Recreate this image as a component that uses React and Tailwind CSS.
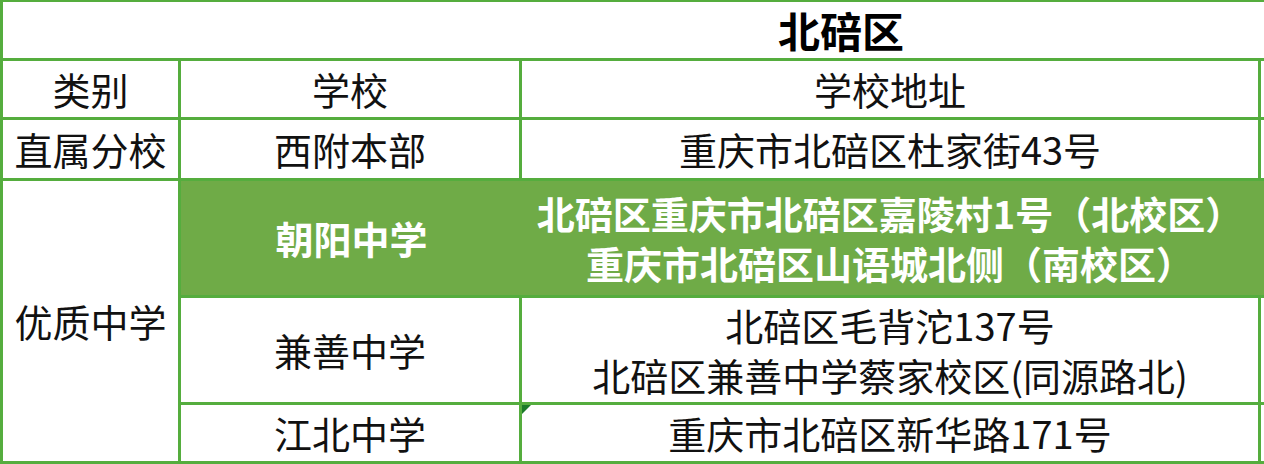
import React from "react";

const cell = "flex items-center justify-center bg-white text-center";

export default function App() {
  return (
    <div
      className="grid h-[464px] w-[1264px] grid-cols-[175px_338px_736px_3px] grid-rows-[56px_56px_58px_114px_104px_56px] gap-[3px] bg-[#55ad3e] pb-[3px] pl-[3px] pt-[2px] text-[38px] leading-[50px] text-[#111]"
      style={{ fontFamily: '"Noto Sans CJK SC", "Microsoft YaHei", sans-serif' }}
    >
      <div className="col-span-4 flex items-center bg-white pl-[775px] text-[42px] font-bold text-black">
        北碚区
      </div>

      <div className={cell}>类别</div>
      <div className={cell}>学校</div>
      <div className={cell}>学校地址</div>
      <div className="bg-white" />

      <div className={cell}>直属分校</div>
      <div className={cell}>西附本部</div>
      <div className={cell}>重庆市北碚区杜家街43号</div>
      <div className="bg-white" />

      <div className={`${cell} row-span-3`}>优质中学</div>
      <div className="col-span-3 flex bg-[#6fab47] font-bold text-white">
        <div className="flex w-[341px] shrink-0 items-center justify-center">朝阳中学</div>
        <div className="flex w-[736px] flex-col items-center justify-center">
          <span>北碚区重庆市北碚区嘉陵村1号（北校区）</span>
          <span>重庆市北碚区山语城北侧（南校区）</span>
        </div>
      </div>

      <div className={cell}>兼善中学</div>
      <div className={`${cell} flex-col`}>
        <span>北碚区毛背沱137号</span>
        <span>北碚区兼善中学蔡家校区(同源路北)</span>
      </div>
      <div className="bg-white" />

      <div className={cell}>江北中学</div>
      <div className={`${cell} relative`}>
        <svg className="absolute left-0 top-0" width="9" height="9" viewBox="0 0 9 9">
          <polygon points="0,0 9,0 0,9" fill="#1c7a2a" />
        </svg>
        重庆市北碚区新华路171号
      </div>
      <div className="bg-white" />
    </div>
  );
}
